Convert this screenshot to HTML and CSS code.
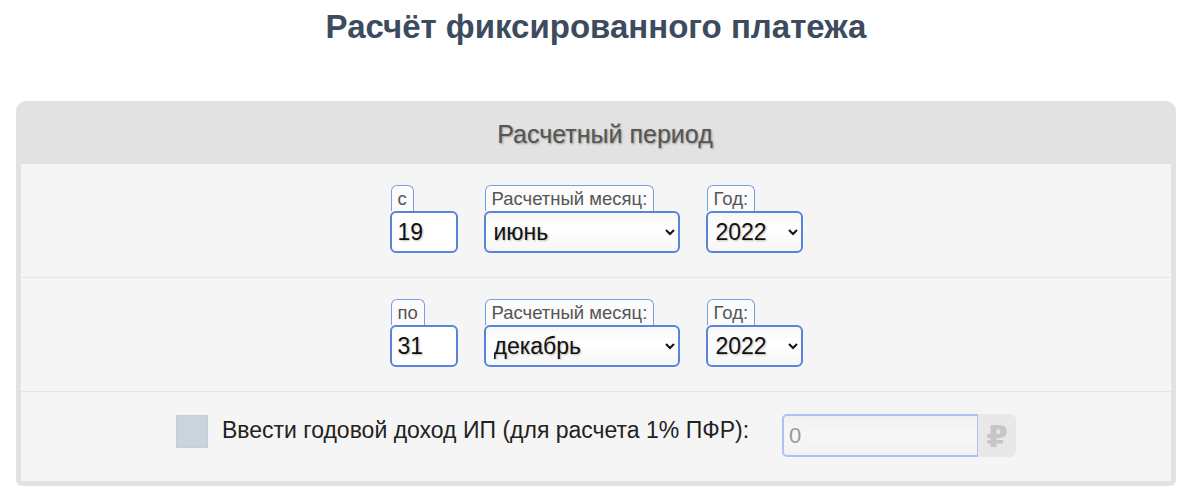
FILE: index.html
```html
<!DOCTYPE html>
<html lang="ru">
<head>
<meta charset="utf-8">
<title>Расчёт фиксированного платежа</title>
<link rel="stylesheet" href="styles.css">
</head>
<body>
<h1 class="title">Расчёт фиксированного платежа</h1>
<div class="card">
  <div class="card-head">Расчетный период</div>
  <div class="row">
    <div class="field">
      <span class="tab">с</span>
      <input class="ctl day" type="text" value="19">
    </div>
    <div class="field">
      <span class="tab">Расчетный месяц:</span>
      <select class="ctl month"><option>июнь</option></select>
    </div>
    <div class="field">
      <span class="tab">Год:</span>
      <select class="ctl year"><option>2022</option></select>
    </div>
  </div>
  <div class="row">
    <div class="field">
      <span class="tab">по</span>
      <input class="ctl day" type="text" value="31">
    </div>
    <div class="field">
      <span class="tab">Расчетный месяц:</span>
      <select class="ctl month"><option>декабрь</option></select>
    </div>
    <div class="field">
      <span class="tab">Год:</span>
      <select class="ctl year"><option>2022</option></select>
    </div>
  </div>
  <div class="row income">
    <span class="check"></span>
    <span class="income-label">Ввести годовой доход ИП (для расчета 1% ПФР):</span>
    <div class="money">
      <input class="money-input" type="text" value="0" disabled>
      <span class="rub">₽</span>
    </div>
  </div>
</div>
</body>
</html>
```

FILE: styles.css
```css
html, body {
  margin: 0;
  padding: 0;
  background: #fff;
  font-family: "Liberation Sans", Arial, sans-serif;
}
.title {
  margin: 0;
  padding-top: 8px;
  height: 91px;
  box-sizing: border-box;
  text-align: center;
  font-size: 33px;
  font-weight: bold;
  color: #3c4b5e;
  width: 1192px;
}
.card {
  margin-left: 16px;
  width: 1160px;
  box-sizing: border-box;
  border: 5px solid #e2e2e2;
  border-top-width: 0;
  border-radius: 12px 12px 6px 6px;
  background: #f5f5f5;
  margin-top: 10px;
}
.card-head {
  background: #e2e2e2;
  height: 63px;
  border-radius: 10px 10px 0 0;
  margin: 0 -5px;
  display: flex;
  align-items: center;
  justify-content: center;
  font-size: 25px;
  color: #555;
  text-shadow: 1px 1px 2px rgba(0,0,0,0.35);
  padding-top: 4px;
  padding-left: 18px;
  box-sizing: border-box;
}
.row {
  display: flex;
  justify-content: center;
  align-items: flex-end;
  gap: 26px;
  padding: 21px 0 24px;
  border-top: 1px solid #e6e6e6;
}
.row:nth-of-type(2) { border-top: 0; }
.field {
  display: flex;
  flex-direction: column;
  align-items: flex-start;
}
.tab {
  margin-left: 1px;
  padding: 3px 6px 2px;
  height: 20px;
  line-height: 20px;
  font-size: 18.5px;
  color: #555;
  background: #fbfbfb;
  border: 1px solid #7d9de3;
  border-bottom: 0;
  border-radius: 6px 6px 0 0;
}
.ctl {
  box-sizing: border-box;
  height: 42px;
  border: 2px solid #5a84da;
  border-radius: 6px;
  background: linear-gradient(#f7f7f7, #fff 45%, #f6f6f6);
  font-family: "Liberation Sans", Arial, sans-serif;
  font-size: 23px;
  color: #111;
  text-shadow: 1px 1px 2px rgba(0,0,0,0.25);
  outline: none;
}
.day {
  width: 68px;
  padding: 0 6px;
  background: #fff;
}
.month {
  width: 196px;
  padding: 0 4px;
}
.year {
  width: 97px;
  padding: 0 4px;
}
.income {
  align-items: flex-start;
  gap: 0;
  padding: 22px 0 24px;
}
.check {
  width: 32px;
  height: 33px;
  background: #cbd3dc;
  box-sizing: border-box;
  border: 1px solid #c6ced8;
  margin-top: 1px;
}
.income-label {
  margin-left: 14px;
  margin-right: 33px;
  font-size: 23px;
  color: #222;
  line-height: 26px;
  margin-top: 3px;
}
.money {
  display: flex;
}
.money-input {
  box-sizing: border-box;
  width: 196px;
  height: 43px;
  border: 2px solid #abc3ef;
  border-right-width: 1px;
  border-radius: 5px 0 0 5px;
  background: linear-gradient(#f1f1f1, #f7f7f7 50%, #f1f1f1);
  font-family: "Liberation Sans", Arial, sans-serif;
  font-size: 22px;
  color: #999;
  padding: 0 5px;
}
.rub {
  width: 38px;
  height: 43px;
  background: #e8e8e8;
  border-radius: 0 6px 6px 0;
  display: flex;
  align-items: center;
  justify-content: center;
  font-size: 31px;
  font-weight: bold;
  color: #c6c6c6;
  font-family: "DejaVu Sans", "Liberation Sans", sans-serif;
}
```
